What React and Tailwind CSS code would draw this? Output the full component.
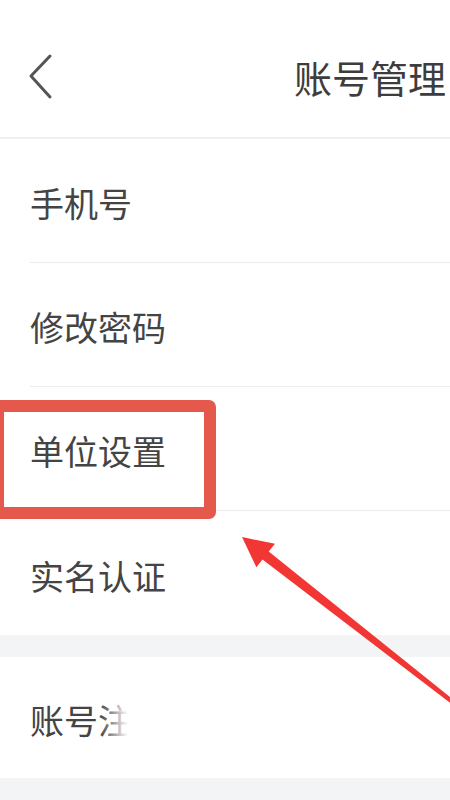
const rows = ["手机号", "修改密码", "单位设置", "实名认证"];

const Row = ({ label, last }) => (
  <div className="h-[124px] flex flex-col bg-white">
    <div className="flex-1 flex items-center pl-[30px] pt-[4px] text-[34px] text-[#444]">
      {label}
    </div>
    {!last && <div className="ml-[30px] h-px bg-[#ececec]" />}
  </div>
);

const App = () => {
  return (
    <div
      className="relative w-[450px] h-[800px] overflow-hidden bg-white"
      style={{ fontFamily: '"Noto Sans CJK SC", "Noto Sans", sans-serif' }}
    >
      {/* Header */}
      <header className="h-[139px] flex items-center justify-between pl-[22px] pr-[4px] pt-[16px] border-b-2 border-[#efefef]">
        <svg width="34" height="48" viewBox="0 0 34 48" className="text-[#555]">
          <polyline
            points="28,3 9,23 28,44"
            fill="none"
            stroke="currentColor"
            strokeWidth="3"
            strokeLinecap="round"
            strokeLinejoin="round"
          />
        </svg>
        <h1 className="text-[38px] text-[#3d3d3d] leading-none">账号管理</h1>
      </header>

      {/* List */}
      <div className="flex flex-col">
        {rows.map((r, i) => (
          <Row key={r} label={r} last={i === rows.length - 1} />
        ))}
      </div>

      <div className="h-[22px] bg-[#f3f4f6]" />

      <div className="relative h-[121px] flex items-center pl-[30px] pt-[4px] text-[34px] text-[#444] bg-white">
        账号注销
        {/* smudge covering the end of the label */}
        <div className="absolute left-[100px] top-[25px] w-[340px] h-[80px] flex">
          <div className="w-[28px] h-full bg-gradient-to-r from-white/0 to-white" />
          <div className="flex-1 h-full bg-white" />
        </div>
      </div>

      <div className="h-[22px] bg-[#f3f4f6]" />

      {/* Highlight box */}
      <div className="absolute left-[-8px] top-[400px] w-[224px] h-[119px] border-[12px] border-[#e4594b] rounded-[7px]" />

      {/* Arrow */}
      <svg
        className="absolute left-0 top-0 pointer-events-none"
        width="450"
        height="800"
        viewBox="0 0 450 800"
      >
        <polygon
          points="242,537 275,543.8 268.7,551.6 471.2,714 468.8,717.2 262.5,559.4 256.4,567.3"
          fill="#f23634"
        />
      </svg>
    </div>
  );
};

export default App;
